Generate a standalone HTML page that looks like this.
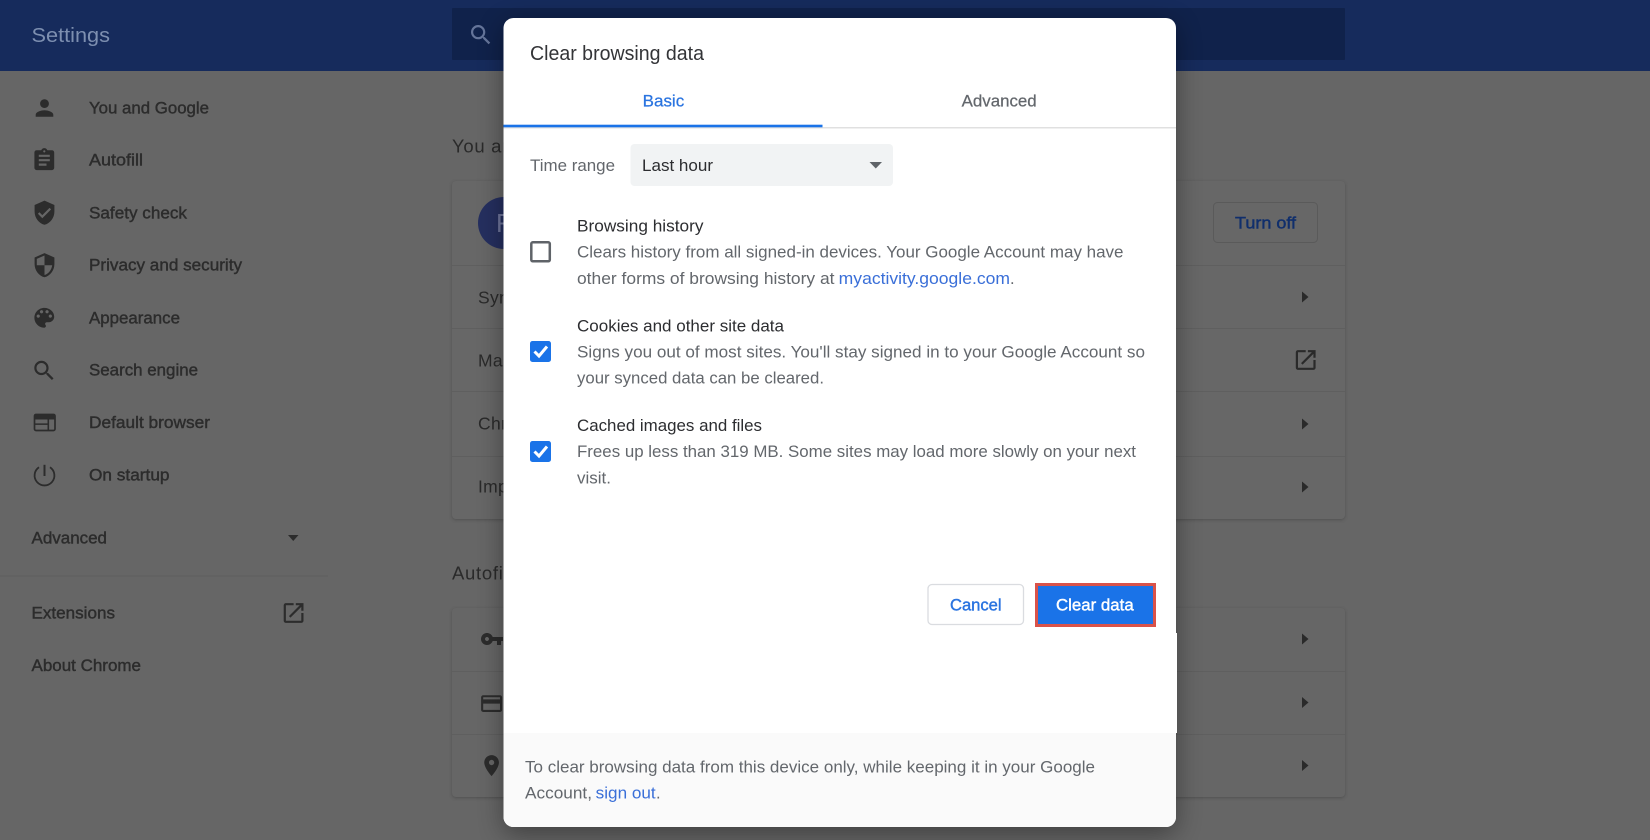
<!DOCTYPE html>
<html><head><meta charset="utf-8"><title>Clear browsing data</title>
<style>
html,body{margin:0;padding:0;width:1650px;height:840px;overflow:hidden;background:#666}
svg{display:block;position:absolute;left:0;top:0}
text{font-family:"Liberation Sans",sans-serif;white-space:pre}
.n{font-size:16.5px;fill:#2c2c2c;stroke:#2c2c2c;stroke-width:.42}
.h{font-size:18.5px;letter-spacing:.7px;fill:#2a2a2a}
.r{font-size:17.5px;letter-spacing:.3px;fill:#2a2a2a}
.i{fill:#2c2c2c}
.a{fill:#2a2a2a}
.t{font-size:16.5px;fill:#2c2d30}
.s{font-size:16.5px;fill:#63676c}
.l{font-size:16.5px;fill:#3a6fd8}
</style></head>
<body>
<svg width="1650" height="840" viewBox="0 0 1650 840" xmlns="http://www.w3.org/2000/svg">
<defs>
<filter id="sh" x="-20%" y="-20%" width="140%" height="140%"><feGaussianBlur stdDeviation="13"/></filter>
<filter id="cs" x="-5%" y="-5%" width="110%" height="110%"><feGaussianBlur stdDeviation="1.5"/></filter>
<path id="ext" d="M19 19H5V5h7V3H5c-1.11 0-2 .9-2 2v14c0 1.1.89 2 2 2h14c1.1 0 2-.9 2-2v-7h-2v7zM14 3v2h3.59l-9.83 9.83 1.41 1.41L19 6.41V10h2V3h-7z"/>
<path id="srch" d="M15.5 14h-.79l-.28-.27C15.41 12.59 16 11.11 16 9.5 16 5.91 13.09 3 9.5 3S3 5.91 3 9.5 5.91 16 9.5 16c1.61 0 3.09-.59 4.23-1.57l.27.28v.79l5 4.99L20.49 19l-4.99-5zm-6 0C7.01 14 5 11.99 5 9.5S7.01 5 9.5 5 14 7.01 14 9.5 11.99 14 9.5 14z"/>
</defs>
<rect width="1650" height="840" fill="#666"/>
<!-- header -->
<rect width="1650" height="71" fill="#162b5c"/>
<rect x="452" y="8" width="893" height="52" rx="1" fill="#10224b"/>
<text x="31.500" y="42" font-size="20.500" fill="#7d8fb0" textLength="78.500" lengthAdjust="spacingAndGlyphs">Settings</text>
<use href="#srch" transform="translate(467.700 21.700) scale(1.1)" fill="#65759a"/>

<!-- sidebar icons -->
<g class="i">
<path transform="translate(31.300 94.800) scale(1.1)" d="M12 12c2.210 0 4-1.790 4-4s-1.790-4-4-4-4 1.790-4 4 1.790 4 4 4zm0 2c-2.670 0-8 1.340-8 4v2h16v-2c0-2.660-5.330-4-8-4z"/>
<path transform="translate(31.100 147) scale(1.1)" d="M19 3h-4.180C14.400 1.840 13.300 1 12 1c-1.300 0-2.400.84-2.820 2H5c-1.100 0-2 .9-2 2v14c0 1.100.9 2 2 2h14c1.100 0 2-.9 2-2V5c0-1.100-.9-2-2-2zm-7 0c.55 0 1 .45 1 1s-.45 1-1 1-1-.45-1-1 .45-1 1-1zm2 14H7v-2h7v2zm3-4H7v-2h10v2zm0-4H7V7h10v2z"/>
<path transform="translate(31.300 199.500) scale(1.1)" d="M12 1L3 5v6c0 5.550 3.840 10.740 9 12 5.160-1.260 9-6.450 9-12V5l-9-4zm-2 16l-4-4 1.410-1.410L10 14.170l6.590-6.590L18 9l-8 8z"/>
<path transform="translate(31.300 252) scale(1.1)" d="M12 1L3 5v6c0 5.550 3.840 10.740 9 12 5.160-1.260 9-6.450 9-12V5l-9-4zm0 10.990h7c-.53 4.120-3.280 7.790-7 8.940V12H5V6.300l7-3.110v8.800z"/>
<path transform="translate(31.100 304.600) scale(1.1)" d="M12 3c-4.970 0-9 4.030-9 9s4.030 9 9 9c.83 0 1.500-.67 1.500-1.500 0-.39-.15-.74-.39-1.010-.23-.26-.38-.61-.38-.99 0-.83.67-1.500 1.500-1.500H16c2.760 0 5-2.240 5-5 0-4.420-4.030-8-9-8zm-5.500 9c-.83 0-1.500-.67-1.500-1.500S5.670 9 6.500 9 8 9.670 8 10.500 7.330 12 6.500 12zm3-4C8.670 8 8 7.330 8 6.500S8.670 5 9.500 5s1.500.67 1.500 1.500S10.330 8 9.500 8zm5 0c-.83 0-1.500-.67-1.500-1.500S13.670 5 14.500 5s1.500.67 1.500 1.500S15.330 8 14.500 8zm3 4c-.83 0-1.500-.67-1.500-1.500S16.670 9 17.500 9s1.500.67 1.500 1.500-.67 1.500-1.500 1.500z"/>
<use href="#srch" transform="translate(31 357.500) scale(1.1)"/>
<!-- default browser -->
<rect x="34.500" y="414.500" width="20.500" height="16" rx="1.500" fill="none" stroke="#2c2c2c" stroke-width="1.700"/>
<rect x="34" y="414" width="21.500" height="5.500" rx="1.500"/>
<rect x="35" y="423.400" width="13" height="1.500"/>
<rect x="47.500" y="419" width="1.600" height="11.500"/>
<!-- power -->
<path d="M39 467.300A9.900 9.900 0 1 0 50 467.300" fill="none" stroke="#2c2c2c" stroke-width="1.800"/>
<path d="M44.500 464.800V476" fill="none" stroke="#2c2c2c" stroke-width="2"/>
<path d="M288 535h10.500l-5.250 6z"/>
<use href="#ext" transform="translate(280.400 599.800) scale(1.1)"/>
</g>

<!-- sidebar text -->
<text class="n" x="89" y="113.300" textLength="120" lengthAdjust="spacingAndGlyphs">You and Google</text>
<text class="n" x="89" y="165.500" textLength="54" lengthAdjust="spacingAndGlyphs">Autofill</text>
<text class="n" x="89" y="218.300" textLength="98" lengthAdjust="spacingAndGlyphs">Safety check</text>
<text class="n" x="89" y="270.500" textLength="153" lengthAdjust="spacingAndGlyphs">Privacy and security</text>
<text class="n" x="89" y="323.300" textLength="91" lengthAdjust="spacingAndGlyphs">Appearance</text>
<text class="n" x="89" y="375.500" textLength="109" lengthAdjust="spacingAndGlyphs">Search engine</text>
<text class="n" x="89" y="428" textLength="121" lengthAdjust="spacingAndGlyphs">Default browser</text>
<text class="n" x="89" y="480.500" textLength="80.500" lengthAdjust="spacingAndGlyphs">On startup</text>
<text class="n" x="31.500" y="543.500" textLength="75.500" lengthAdjust="spacingAndGlyphs">Advanced</text>
<rect x="0" y="575.500" width="328" height="1" fill="#5f5f5f"/>
<text class="n" x="31.500" y="618.500" textLength="83.500" lengthAdjust="spacingAndGlyphs">Extensions</text>
<text class="n" x="31.500" y="671.200" textLength="109.500" lengthAdjust="spacingAndGlyphs">About Chrome</text>

<!-- main cards -->
<text class="h" x="452" y="152.500">You and Google</text>
<rect x="452" y="182" width="893" height="338" rx="4" fill="#3a3a3a" opacity=".5" filter="url(#cs)"/>
<rect x="452" y="181" width="893" height="338" rx="4" fill="#676767"/>
<g fill="#5f5f5f">
<rect x="452" y="265" width="893" height="1"/><rect x="452" y="328" width="893" height="1"/>
<rect x="452" y="391" width="893" height="1"/><rect x="452" y="456" width="893" height="1"/>
</g>
<circle cx="504" cy="223" r="26" fill="#252f5f"/>
<text x="496" y="232" font-size="26" fill="#6f769c">F</text>
<rect x="1213.500" y="202.500" width="104" height="40" rx="4" fill="none" stroke="#5a5a5a"/>
<text x="1235" y="228.500" font-size="16.500" fill="#102f6c" stroke="#102f6c" stroke-width=".45" textLength="61" lengthAdjust="spacingAndGlyphs">Turn off</text>
<text class="r" x="478" y="303.500">Sync and Google services</text>
<text class="r" x="478" y="366.500">Manage your Google Account</text>
<text class="r" x="478" y="429.500">Chrome name and picture</text>
<text class="r" x="478" y="492.500">Import bookmarks and settings</text>
<text class="h" x="452" y="579.500">Autofill</text>
<rect x="452" y="609" width="893" height="189" rx="4" fill="#3a3a3a" opacity=".5" filter="url(#cs)"/>
<rect x="452" y="608" width="893" height="189" rx="4" fill="#666"/>
<g fill="#5f5f5f"><rect x="452" y="671" width="893" height="1"/><rect x="452" y="734" width="893" height="1"/></g>
<g class="a">
<path d="M1302 291.500l6.500 5.500-6.500 5.500z"/>
<path d="M1302 418.500l6.500 5.500-6.500 5.500z"/>
<path d="M1302 481.500l6.500 5.500-6.500 5.500z"/>
<path d="M1302 633.500l6.500 5.500-6.500 5.500z"/>
<path d="M1302 697l6.500 5.500-6.500 5.500z"/>
<path d="M1302 760l6.500 5.500-6.500 5.500z"/>
<use href="#ext" transform="translate(1292.500 346.800) scale(1.1)"/>
</g>
<g class="i">
<path transform="translate(480 627)" d="M12.650 10C11.830 7.670 9.610 6 7 6c-3.310 0-6 2.690-6 6s2.690 6 6 6c2.610 0 4.830-1.670 5.650-4H17v4h4v-4h2v-4H12.650zM7 14c-1.100 0-2-.9-2-2s.9-2 2-2 2 .9 2 2-.9 2-2 2z"/>
<path transform="translate(479 691) scale(1.05)" d="M20 4H4c-1.110 0-1.990.89-1.990 2L2 18c0 1.110.89 2 2 2h16c1.110 0 2-.89 2-2V6c0-1.110-.89-2-2-2zm0 14H4v-6h16v6zm0-10H4V6h16v2z"/>
<path transform="translate(479 753) scale(1.05)" d="M12 2C8.130 2 5 5.130 5 9c0 5.250 7 13 7 13s7-7.750 7-13c0-3.870-3.130-7-7-7zm0 9.500c-1.380 0-2.500-1.120-2.500-2.500s1.120-2.500 2.500-2.500 2.500 1.120 2.500 2.500-1.120 2.500-2.500 2.500z"/>
</g>

<!-- dialog -->
<rect x="503.500" y="24" width="672.500" height="810" rx="10" fill="#000" opacity=".38" filter="url(#sh)"/>
<rect x="503.500" y="18" width="672.500" height="809" rx="10" fill="#fff"/>
<rect x="503.500" y="633" width="673.500" height="100" fill="#fff"/>
<path d="M503.500 733H1176V817a10 10 0 0 1-10 10H513.500a10 10 0 0 1-10-10z" fill="#fafafa"/>

<text x="530" y="59.800" font-size="20" fill="#333437" textLength="174" lengthAdjust="spacingAndGlyphs">Clear browsing data</text>
<text x="642.700" y="106.300" font-size="16.500" fill="#2a74e0" stroke="#2a74e0" stroke-width=".25" textLength="41.500" lengthAdjust="spacingAndGlyphs">Basic</text>
<text x="961.700" y="106.300" font-size="16.500" fill="#63676c" stroke="#63676c" stroke-width=".25" textLength="75" lengthAdjust="spacingAndGlyphs">Advanced</text>
<rect x="503.500" y="127" width="672.500" height="1.500" fill="#e0e0e0"/>
<rect x="503.500" y="124.700" width="319" height="2.600" fill="#1a73e8"/>

<text class="s" x="530" y="171" textLength="85" lengthAdjust="spacingAndGlyphs">Time range</text>
<rect x="630.500" y="144" width="262.500" height="42" rx="4" fill="#f1f3f4"/>
<text class="t" x="642" y="171" textLength="71" lengthAdjust="spacingAndGlyphs">Last hour</text>
<path d="M869.500 162h12.500l-6.250 6.500z" fill="#5f6368"/>

<rect x="531.300" y="242.300" width="18.500" height="19" rx="1.500" fill="#fff" stroke="#5f6368" stroke-width="2.500"/>
<text class="t" x="577" y="231.300" textLength="126.500" lengthAdjust="spacingAndGlyphs">Browsing history</text>
<text class="s" x="577" y="257.500" textLength="546.500" lengthAdjust="spacingAndGlyphs">Clears history from all signed-in devices. Your Google Account may have</text>
<text class="s" x="577" y="284" textLength="257.500" lengthAdjust="spacingAndGlyphs">other forms of browsing history at</text>
<text class="l" x="838.700" y="284" textLength="171.300" lengthAdjust="spacingAndGlyphs">myactivity.google.com</text>
<text class="s" x="1010" y="284">.</text>

<rect x="530" y="341" width="21" height="21" rx="2.500" fill="#1a73e8"/>
<path d="M534.500 351.500l4.500 4.500 8-9.500" fill="none" stroke="#fff" stroke-width="3"/>
<text class="t" x="577" y="331.300" textLength="207" lengthAdjust="spacingAndGlyphs">Cookies and other site data</text>
<text class="s" x="577" y="357.500" textLength="568" lengthAdjust="spacingAndGlyphs">Signs you out of most sites. You'll stay signed in to your Google Account so</text>
<text class="s" x="577" y="383.500" textLength="247" lengthAdjust="spacingAndGlyphs">your synced data can be cleared.</text>

<rect x="530" y="441" width="21" height="21" rx="2.500" fill="#1a73e8"/>
<path d="M534.500 451.500l4.500 4.500 8-9.500" fill="none" stroke="#fff" stroke-width="3"/>
<text class="t" x="577" y="431" textLength="185" lengthAdjust="spacingAndGlyphs">Cached images and files</text>
<text class="s" x="577" y="457" textLength="559" lengthAdjust="spacingAndGlyphs">Frees up less than 319 MB. Some sites may load more slowly on your next</text>
<text class="s" x="577" y="483.300" textLength="34" lengthAdjust="spacingAndGlyphs">visit.</text>

<rect x="928" y="584.500" width="95.500" height="40" rx="4" fill="#fff" stroke="#dadce0" stroke-width="1.300"/>
<text x="950" y="610.500" font-size="16.500" fill="#2a74e0" stroke="#2a74e0" stroke-width=".4" textLength="51.600" lengthAdjust="spacingAndGlyphs">Cancel</text>
<rect x="1036.500" y="584.500" width="118" height="41" fill="#1a73e8" stroke="#d9534a" stroke-width="3"/>
<text x="1056" y="610.500" font-size="16.500" fill="#fff" stroke="#fff" stroke-width=".4" textLength="77.700" lengthAdjust="spacingAndGlyphs">Clear data</text>

<text class="s" x="525" y="772.300" textLength="570" lengthAdjust="spacingAndGlyphs">To clear browsing data from this device only, while keeping it in your Google</text>
<text class="s" x="525" y="798.300" textLength="67" lengthAdjust="spacingAndGlyphs">Account,</text>
<text class="l" x="595.700" y="798.300" textLength="60" lengthAdjust="spacingAndGlyphs">sign out</text>
<text class="s" x="656" y="798.300">.</text>
</svg>
</body></html>
